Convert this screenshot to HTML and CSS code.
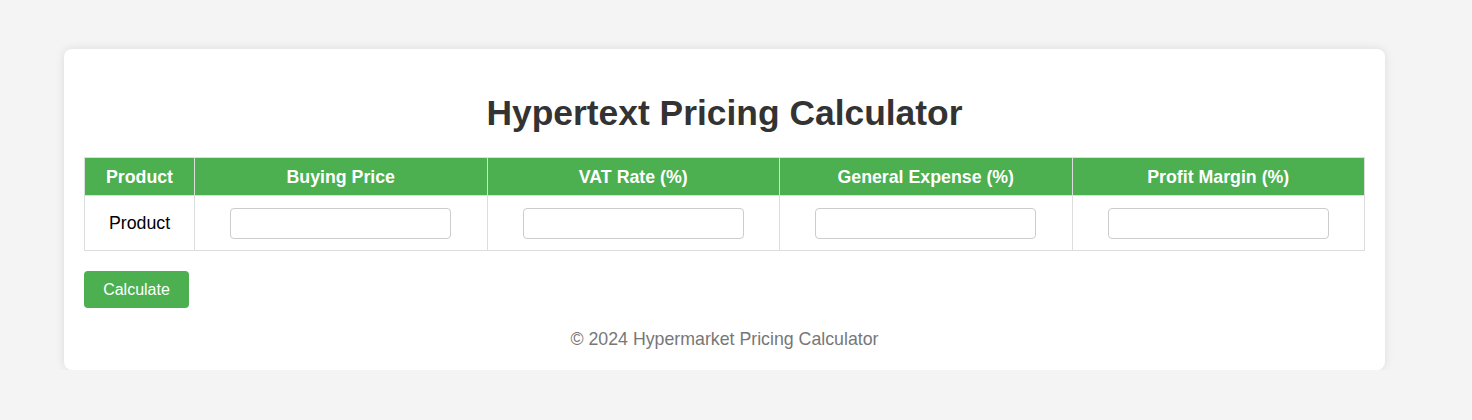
FILE: index.html
```html
<!DOCTYPE html>
<html lang="en">
<head>
<meta charset="utf-8">
<title>Hypertext Pricing Calculator</title>
<link rel="stylesheet" href="styles.css">
</head>
<body>
<div class="container">
  <h1 class="title">Hypertext Pricing Calculator</h1>
  <table class="calc-table">
    <thead>
      <tr>
        <th class="col-product">Product</th>
        <th>Buying Price</th>
        <th>VAT Rate (%)</th>
        <th>General Expense (%)</th>
        <th>Profit Margin (%)</th>
      </tr>
    </thead>
    <tbody>
      <tr>
        <td>Product</td>
        <td><input class="field" type="text"></td>
        <td><input class="field" type="text"></td>
        <td><input class="field" type="text"></td>
        <td><input class="field" type="text"></td>
      </tr>
    </tbody>
  </table>
  <button class="btn" type="button">Calculate</button>
  <p class="footer">© 2024 Hypermarket Pricing Calculator</p>
</div>
</body>
</html>
```
FILE: styles.css
```css
* { box-sizing: border-box; }
html, body { margin: 0; padding: 0; }
body {
  background: #f4f4f4;
  font-family: "Liberation Sans", Arial, sans-serif;
  color: #000;
  padding-top: 49px;
  padding-left: 64px;
}
.container {
  width: 1321px;
  background: #fff;
  border-radius: 8px;
  box-shadow: 0 0 10px rgba(0,0,0,0.1);
  padding: 20px;
}
.title {
  text-align: center;
  color: #333;
  font-size: 35.4px;
  font-weight: bold;
  margin: 24px 0 23px;
  line-height: 41px;
}
.calc-table {
  width: 100%;
  border-collapse: collapse;
}
.calc-table th,
.calc-table td {
  border: 1px solid #ddd;
  text-align: center;
  font-size: 17.75px;
}
.calc-table th {
  background: #4CAF50;
  color: #fff;
  font-weight: bold;
  padding: 8px 10px;
  height: 38px;
  line-height: 20px;
}
.calc-table td {
  padding: 10px;
  height: 55px;
  line-height: 20px;
}
.col-product { width: 110px; }
.field {
  width: 81.5%;
  height: 31px;
  border: 1px solid #ccc;
  border-radius: 4px;
  padding: 6px;
  font-size: 14px;
  vertical-align: middle;
}
.btn {
  display: block;
  margin-top: 20px;
  background: #4CAF50;
  color: #fff;
  border: none;
  border-radius: 4px;
  font-family: "Liberation Sans", Arial, sans-serif;
  font-size: 16px;
  width: 105px;
  height: 37px;
  padding: 0;
  cursor: pointer;
}
.footer {
  text-align: center;
  color: #777;
  font-size: 17.75px;
  line-height: 20px;
  margin: 21px 0 1px;
}
```
